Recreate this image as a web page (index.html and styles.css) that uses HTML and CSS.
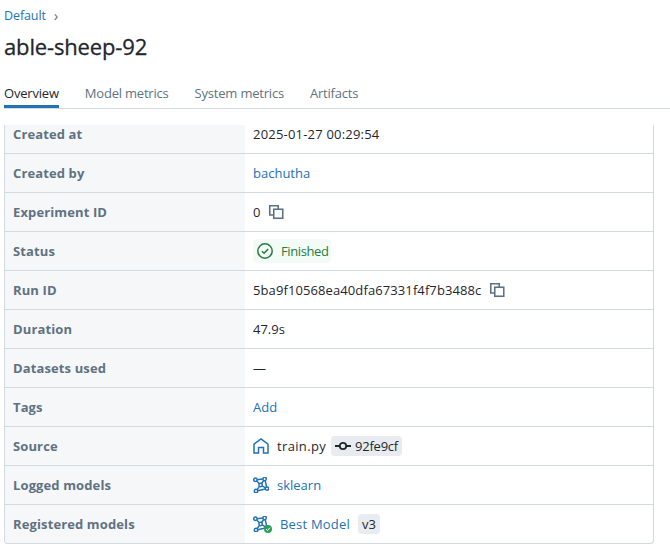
FILE: index.html
```html
<!DOCTYPE html>
<html lang="en">
<head>
  <meta charset="UTF-8">
  <title>able-sheep-92</title>
  <link rel="stylesheet" href="styles.css">
</head>
<body>
  <svg class="icon-defs" width="0" height="0">
    <symbol id="copy" viewBox="0 0 16 16">
      <path d="M5.5 11H1.75V1.75h8.5V5" fill="none" stroke="currentColor" stroke-width="1.6"/>
      <rect x="5.75" y="5.25" width="9" height="9" fill="none" stroke="currentColor" stroke-width="1.6"/>
    </symbol>
    <symbol id="model" viewBox="0 0 16 16">
      <g fill="none" stroke="currentColor" stroke-width="1.5">
        <circle cx="2.4" cy="2.8" r="1.7"/>
        <circle cx="11.6" cy="2" r="1.7"/>
        <circle cx="7.6" cy="8" r="1.7"/>
        <circle cx="14" cy="11.6" r="1.7"/>
        <circle cx="3" cy="14" r="1.7"/>
        <path d="M4.1 2.7 9.9 2.1M3.7 4 6.3 6.8M10.7 3.5 8.6 6.5M12.2 3.6 13.6 9.9M9.1 8.9 12.6 10.8M6.4 9.3 4.2 12.7M4.7 13.8 12.4 12"/>
      </g>
    </symbol>
  </svg>

  <nav class="breadcrumb"><a href="#">Default</a><span class="crumb-sep">&rsaquo;</span></nav>
  <h1 class="run-title">able-sheep-92</h1>

  <div class="tabs">
    <a class="tab tab-active" href="#">Overview</a>
    <a class="tab" href="#">Model metrics</a>
    <a class="tab" href="#">System metrics</a>
    <a class="tab" href="#">Artifacts</a>
  </div>

  <div class="details-scroll">
    <div class="details">
      <div class="row"><div class="label">Created at</div><div class="value"><span class="digits">2025-01-27 00:29:54</span></div></div>
      <div class="row"><div class="label">Created by</div><div class="value"><a href="#">bachutha</a></div></div>
      <div class="row">
        <div class="label">Experiment ID</div>
        <div class="value">0 <svg class="copy-icon"><use href="#copy"/></svg></div>
      </div>
      <div class="row">
        <div class="label">Status</div>
        <div class="value">
          <span class="status">
            <svg class="status-icon" viewBox="0 0 16 16">
              <circle cx="8" cy="8" r="7.2" fill="none" stroke="currentColor" stroke-width="1.5"/>
              <path d="M4.9 8.2 7.1 10.3 11.2 5.9" fill="none" stroke="currentColor" stroke-width="1.5"/>
            </svg>
            Finished
          </span>
        </div>
      </div>
      <div class="row">
        <div class="label">Run ID</div>
        <div class="value"><span class="run-id">5ba9f10568ea40dfa67331f4f7b3488c</span> <svg class="copy-icon"><use href="#copy"/></svg></div>
      </div>
      <div class="row"><div class="label">Duration</div><div class="value">47.9s</div></div>
      <div class="row"><div class="label">Datasets used</div><div class="value">&mdash;</div></div>
      <div class="row"><div class="label">Tags</div><div class="value"><a href="#">Add</a></div></div>
      <div class="row">
        <div class="label">Source</div>
        <div class="value">
          <svg class="source-icon" viewBox="0 0 16 16">
            <path d="M1 15V6.2L8 1l7 5.2V15h-4.5V9.5h-5V15z" fill="none" stroke="currentColor" stroke-width="1.5"/>
          </svg>
          <span class="source-name">train.py</span>
          <span class="tag">
            <svg class="commit-icon" viewBox="0 0 16 10">
              <circle cx="8" cy="5" r="3.2" fill="none" stroke="currentColor" stroke-width="1.8"/>
              <path d="M0 5h5M11 5h5" stroke="currentColor" stroke-width="1.8"/>
            </svg>
            <span class="commit-hash">92fe9cf</span>
          </span>
        </div>
      </div>
      <div class="row">
        <div class="label">Logged models</div>
        <div class="value"><svg class="model-icon"><use href="#model"/></svg><a class="model-link" href="#">sklearn</a></div>
      </div>
      <div class="row">
        <div class="label">Registered models</div>
        <div class="value">
          <span class="model-badged">
            <svg class="model-icon"><use href="#model"/></svg>
            <svg class="model-check" viewBox="0 0 8 8">
              <circle cx="4" cy="4" r="4" fill="#2e9e58"/>
              <path d="M2 4.1 3.5 5.5 6 2.7" fill="none" stroke="#fff" stroke-width="1"/>
            </svg>
          </span>
          <a class="best-model" href="#">Best Model</a>
          <span class="tag version">v3</span>
        </div>
      </div>
    </div>
  </div>
</body>
</html>
```

FILE: styles.css
```css
/* General styles */
body {
  font-family: "Open Sans", "Noto Sans", Arial, sans-serif;
  font-size: 13px;
  margin: 0;
  padding: 0 0 0 4px;
  background-color: #fff;
  color: #1f272d;
  overflow: hidden;
}

a {
  color: #2272b4;
  text-decoration: none;
}

.icon-defs {
  display: block;
  position: absolute;
}

/* Header */
.breadcrumb {
  display: flex;
  align-items: center;
  height: 16px;
  padding-top: 7px;
  font-size: 12.5px;
  letter-spacing: -0.1px;
}

.crumb-sep {
  margin-left: 8px;
  color: #5f7281;
  font-size: 15px;
  line-height: 16px;
}

.run-title {
  margin: 7px 0 0;
  height: 32px;
  font-size: 22px;
  font-weight: 400;
  line-height: 32px;
  letter-spacing: -0.15px;
  -webkit-text-stroke: 0.3px #1f272d;
}

/* Tabs */
.tabs {
  display: flex;
  gap: 26px;
  margin-top: 19px;
  height: 27px;
  border-bottom: 1px solid #d1d9e1;
}

.tab {
  height: 27px;
  line-height: 24px;
  color: #5f7281;
  font-weight: 500;
  letter-spacing: -0.2px;
  box-sizing: border-box;
}

.tab-active {
  color: #1f272d;
  border-bottom: 3px solid #2272b4;
}

/* Details table */
.details-scroll {
  margin-top: 16px;
  width: 650px;
  height: 419px;
  overflow: hidden;
}

.details {
  margin-top: -10px;
  box-sizing: border-box;
  border: 1px solid #d1d9e1;
  border-top: 0;
  border-radius: 4px;
  box-shadow: 0 1px 2px rgba(0, 0, 0, 0.05);
  overflow: hidden;
}

.row {
  display: flex;
  height: 39px;
  box-sizing: border-box;
  border-bottom: 1px solid #d1d9e1;
}

.row:last-child {
  height: 38px;
  border-bottom: 0;
}

.label {
  box-sizing: border-box;
  width: 240px;
  padding-left: 8px;
  line-height: 38px;
  background-color: #f6f7f9;
  color: #5f7281;
  font-weight: 700;
  letter-spacing: 0.12px;
}

.value {
  display: flex;
  align-items: center;
  flex: 1;
  padding-left: 8px;
  gap: 8px;
}

.digits {
  letter-spacing: 0.2px;
}

.run-id {
  letter-spacing: 0.1px;
}

.copy-icon {
  width: 16px;
  height: 16px;
  color: #5f7281;
}

.status {
  display: flex;
  align-items: center;
  gap: 8px;
  height: 24px;
  padding: 0 3px 0 4px;
  border-radius: 4px;
  background-color: #f3fbf6;
  color: #277c43;
  letter-spacing: -0.4px;
}

.status-icon {
  width: 16px;
  height: 16px;
}

.source-icon {
  width: 16px;
  height: 16px;
  color: #2272b4;
}

.source-name {
  margin-right: -3px;
  letter-spacing: 0.35px;
}

.tag {
  display: flex;
  align-items: center;
  gap: 4px;
  height: 20px;
  padding: 0 4px;
  border-radius: 4px;
  background-color: #e8ecf0;
}

.commit-icon {
  width: 16px;
  height: 10px;
}

.commit-hash {
  letter-spacing: -0.25px;
}

.model-icon {
  width: 16px;
  height: 16px;
  color: #2272b4;
}

.model-badged {
  position: relative;
  display: flex;
  width: 19px;
  height: 16px;
}

.model-check {
  position: absolute;
  right: 0;
  bottom: -1px;
  width: 8px;
  height: 8px;
}

.best-model {
  letter-spacing: 0.2px;
}
```
